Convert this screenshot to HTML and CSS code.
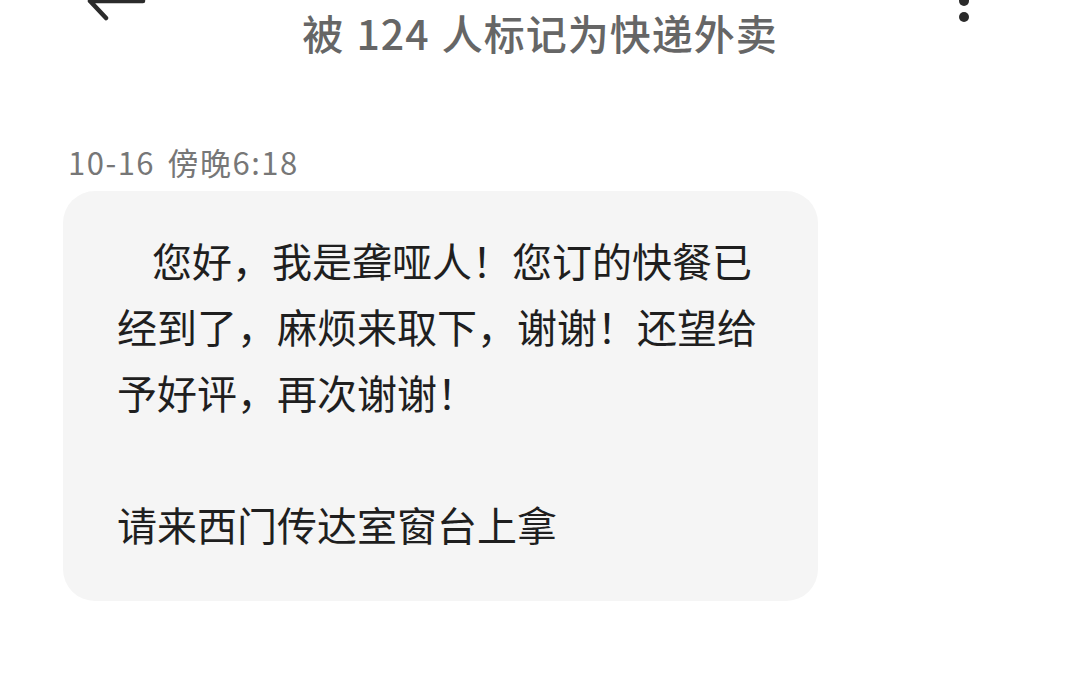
FILE: index.html
```html
<!DOCTYPE html>
<html lang="zh-CN">
<head>
  <meta charset="UTF-8">
  <meta name="viewport" content="width=device-width, initial-scale=1.0">
  <title>被 124 人标记为快递外卖</title>
  <link rel="stylesheet" href="styles.css">
</head>
<body>
  <div class="header">
    <svg class="back-icon" width="70" height="24" viewBox="0 0 70 24">
      <path d="M57 1 H4 M4 1 L20 18" fill="none" stroke="#2b2b2b" stroke-width="4.5" stroke-linecap="round" stroke-linejoin="round"/>
    </svg>
    <h1 class="title">被 124 人标记为快递外卖</h1>
    <svg class="more-icon" width="20" height="24" viewBox="0 0 20 24">
      <circle cx="10" cy="1" r="5" fill="#2b2b2b"/>
      <circle cx="10" cy="17" r="5" fill="#2b2b2b"/>
    </svg>
  </div>

  <div class="thread">
    <div class="time">10-16 傍晚6:18</div>
    <div class="bubble">
      <p class="first">您好，我是聋哑人！您订的快餐已经到了，麻烦来取下，谢谢！还望给予好评，再次谢谢！</p>
      <p class="blank">&nbsp;</p>
      <p>请来西门传达室窗台上拿</p>
    </div>
  </div>
</body>
</html>
```

FILE: styles.css
```css
body {
  margin: 0;
  background: #ffffff;
  font-family: "Noto Sans CJK SC", "Noto Sans", sans-serif;
  color: #222222;
}

.header {
  display: grid;
  grid-template-columns: 1fr auto 1fr;
  align-items: start;
  height: 64px;
  padding: 0 96px;
}

.back-icon {
  justify-self: start;
  margin-left: -10px;
}

.more-icon {
  justify-self: end;
  margin-right: 10px;
}

.title {
  margin: 0;
  font-size: 41px;
  font-weight: 500;
  line-height: 64px;
  letter-spacing: 1px;
  word-spacing: 2px;
  color: #666666;
  text-align: center;
}

.thread {
  padding: 78px 0 0 63px;
}

.time {
  font-size: 31px;
  line-height: 40px;
  letter-spacing: 1.5px;
  word-spacing: 4px;
  color: #777777;
  padding-left: 5px;
  margin-bottom: 9px;
}

.bubble {
  box-sizing: border-box;
  width: 755px;
  padding: 36px 54px 44px 54px;
  background: #f5f5f5;
  border-radius: 32px;
}

.bubble p {
  margin: 0;
  font-size: 40px;
  line-height: 66px;
  color: #1f1f1f;
}

.bubble .first {
  text-indent: 35px;
}
```
